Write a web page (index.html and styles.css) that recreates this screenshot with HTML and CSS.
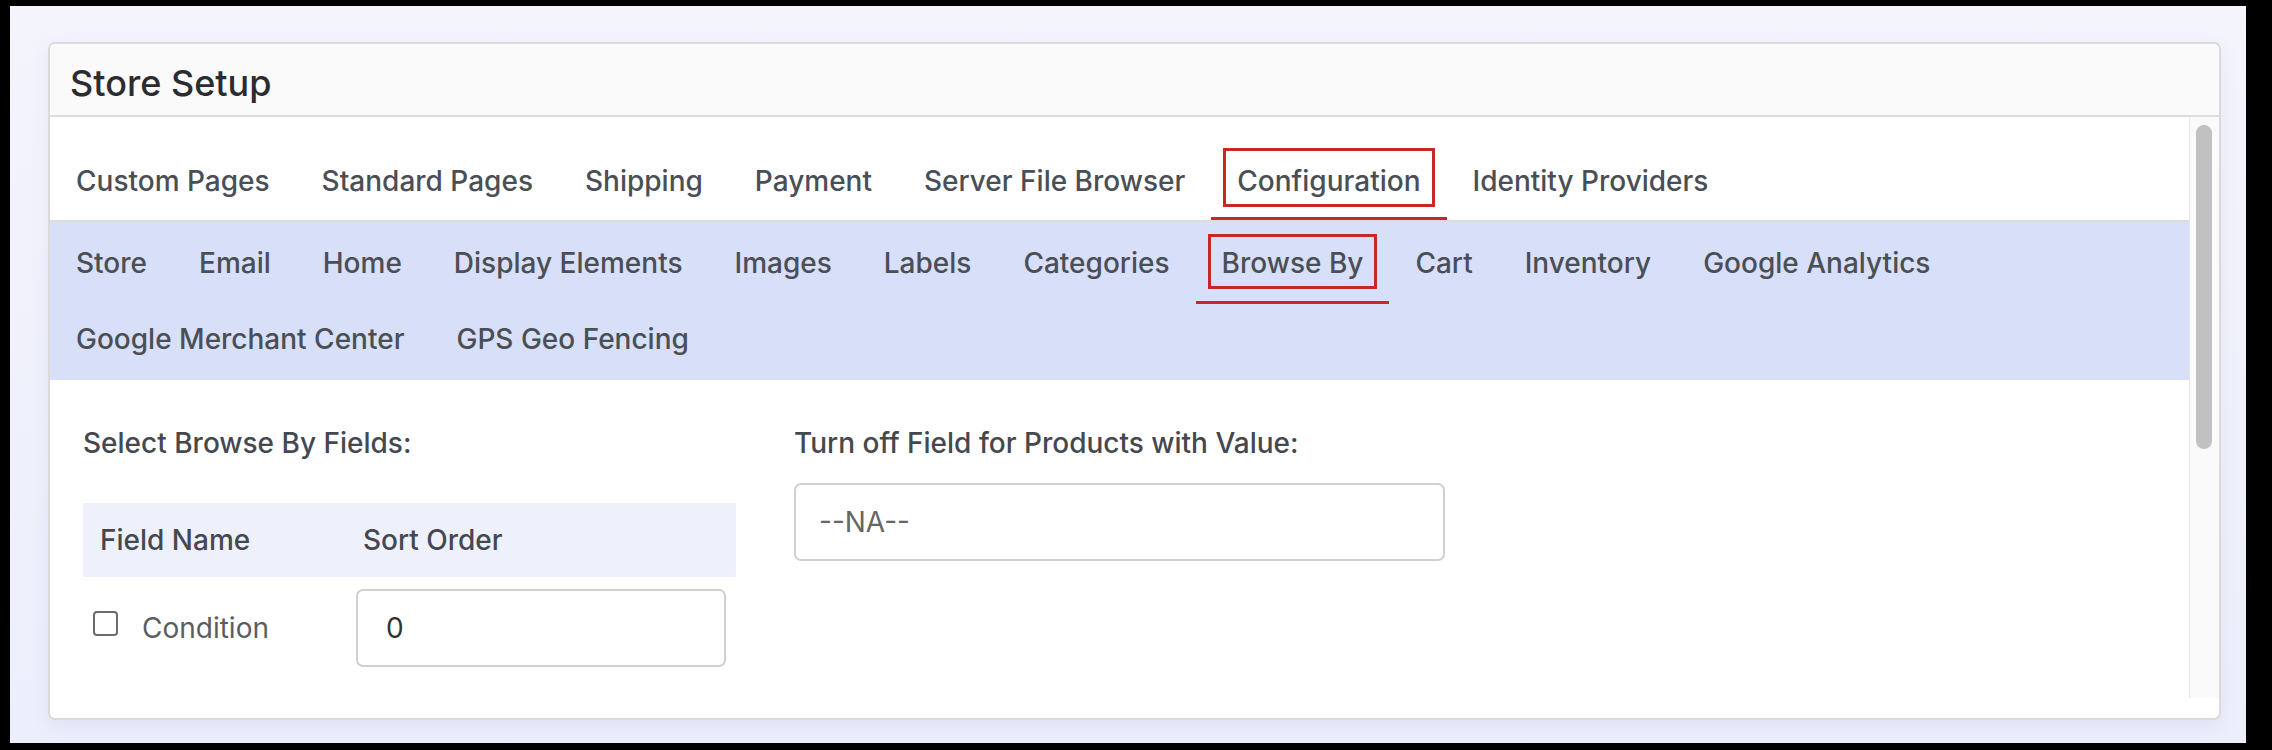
FILE: index.html
```html
<!DOCTYPE html>
<html>
<head>
<title>Store Setup - Browse By</title>
<link rel="stylesheet" href="styles.css">
</head>
<body>

	<div class="frame">
		<div class="card">
			<div class="card-head">Store Setup</div>

			<div class="card-body">
				<div class="scroll-view">
					<ul class="tabs">
						<li><a>Custom Pages</a></li>
						<li><a>Standard Pages</a></li>
						<li><a>Shipping</a></li>
						<li><a>Payment</a></li>
						<li><a>Server File Browser</a></li>
						<li><a class="active"><span class="mark">Configuration</span></a></li>
						<li><a>Identity Providers</a></li>
					</ul>

					<ul class="subtabs">
						<li><a>Store</a></li>
						<li><a>Email</a></li>
						<li><a>Home</a></li>
						<li><a>Display Elements</a></li>
						<li><a>Images</a></li>
						<li><a>Labels</a></li>
						<li><a>Categories</a></li>
						<li><a class="active"><span class="mark">Browse By</span></a></li>
						<li><a>Cart</a></li>
						<li><a>Inventory</a></li>
						<li><a>Google Analytics</a></li>
						<li><a>Google Merchant Center</a></li>
						<li><a>GPS Geo Fencing</a></li>
					</ul>

					<div class="panel">
						<div class="column">
							<div class="label">Select Browse By Fields:</div>
							<table class="fields">
								<tr>
									<th class="name-col">Field Name</th>
									<th>Sort Order</th>
								</tr>
								<tr>
									<td class="name-col">
										<label class="check"><span class="box"></span>Condition</label>
									</td>
									<td><div class="input">0</div></td>
								</tr>
							</table>
						</div>

						<div class="column">
							<div class="label">Turn off Field for Products with Value:</div>
							<div class="input select">--NA--</div>
						</div>
					</div>
				</div>

				<div class="scrollbar"><div class="thumb"></div></div>
			</div>

			<div class="card-foot"></div>
		</div>
	</div>

</body>
</html>
```

FILE: styles.css
```css
html, body
   {
   	margin			:  0px ;
   	padding			:  0px ;
   	background		:  #000000 ;
    }

body
   {
   	font-family		:  "Inter", "Liberation Sans", sans-serif ;
   	color			:  #4a4e55 ;
    }

.frame
   {
   	margin			:  6px 26px 7px 10px ;
   	height			:  737px ;
   	box-sizing		:  border-box ;
   	padding			:  36px 25px 0px 38px ;
   	background		:  linear-gradient(to bottom, #f3f4fc, #eceefb) ;
    }

.card
   {
   	border			:  2px solid #dadada ;
   	border-radius		:  7px ;
   	background		:  #ffffff ;
   	box-shadow		:  0px 6px 18px rgba(120, 130, 210, 0.10) ;
   	overflow		:  hidden ;
    }

.card-head
   {
   	height			:  73px ;
   	padding			:  6px 20px 0px 20px ;
   	box-sizing		:  border-box ;
   	display			:  flex ;
   	align-items		:  center ;
   	background		:  #fafafa ;
   	border-bottom		:  2px solid #dcdcdc ;
   	font-size		:  36px ;
   	font-weight		:  500 ;
   	color			:  #2b2c30 ;
    }

.card-body
   {
   	display			:  flex ;
   	height			:  581px ;
    }

.scroll-view
   {
   	flex			:  1 ;
   	overflow		:  hidden ;
    }

.scrollbar
   {
   	width			:  29px ;
   	border-left		:  1px solid #e6e6e6 ;
   	background		:  #fafafa ;
    }

.thumb
   {
   	width			:  16px ;
   	height			:  324px ;
   	margin			:  8px 0px 0px 6px ;
   	border-radius		:  8px ;
   	background		:  #c1c1c1 ;
    }

.card-foot
   {
   	height			:  20px ;
    }

/* Top level tabs */

.tabs, .subtabs
   {
   	list-style		:  none ;
   	margin			:  0px ;
   	padding			:  0px ;
   	display			:  flex ;
   	flex-wrap		:  wrap ;
   	font-size		:  28px ;
   	font-weight		:  500 ;
   	line-height		:  42px ;
    }

.tabs
   {
   	border-bottom		:  2px solid #dcdcdc ;
    }

.tabs a, .subtabs a
   {
   	display			:  block ;
   	padding			:  43px 26px 15px 26px ;
   	border-bottom		:  3px solid transparent ;
   	white-space		:  nowrap ;
    }

.subtabs
   {
   	padding			:  6px 0px 0px 0px ;
   	background		:  #d8dff8 ;
    }

.subtabs a
   {
   	padding			:  14px 26px 17px 26px ;
    }

.tabs a.active, .subtabs a.active
   {
   	border-bottom-color	:  #c62828 ;
    }

.mark
   {
   	display			:  inline-block ;
   	padding			:  5px 11px 2px 11px ;
   	margin			:  -8px -14px -5px -14px ;
   	border			:  3px solid #c62828 ;
    }

.tabs .mark
   {
   	padding-top		:  9px ;
   	margin-top		:  -12px ;
    }

/* Browse by panel */

.panel
   {
   	display			:  grid ;
   	grid-template-columns	:  653px 651px ;
   	column-gap		:  58px ;
   	padding			:  42px 33px 38px 33px ;
    }

.label
   {
   	font-size		:  28px ;
   	font-weight		:  500 ;
   	line-height		:  42px ;
   	color			:  #45484e ;
    }

.fields
   {
   	width			:  100% ;
   	margin-top		:  39px ;
   	border-collapse		:  collapse ;
    }

.fields th
   {
   	height			:  74px ;
   	padding			:  0px 17px ;
   	background		:  #eef1fb ;
   	text-align		:  left ;
   	font-size		:  28px ;
   	font-weight		:  500 ;
   	color			:  #45484e ;
    }

.fields td
   {
   	padding			:  12px 10px 0px 10px ;
    }

.name-col
   {
   	width			:  229px ;
    }

.check
   {
   	display			:  flex ;
   	align-items		:  center ;
   	gap			:  24px ;
   	font-size		:  28px ;
   	color			:  #5c5d61 ;
    }

.box
   {
   	width			:  21px ;
   	height			:  21px ;
   	border			:  2px solid #6b6b6b ;
   	border-radius		:  4px ;
   	margin-top		:  -10px ;
    }

.input
   {
   	height			:  74px ;
   	padding			:  0px 28px ;
   	display			:  flex ;
   	align-items		:  center ;
   	border			:  2px solid #d0d0d0 ;
   	border-radius		:  7px ;
   	font-size		:  28px ;
   	color			:  #333333 ;
   	box-sizing		:  content-box ;
    }

.fields .input
   {
   	width			:  310px ;
    }

.select
   {
   	margin-top		:  19px ;
   	padding			:  0px 23px ;
   	color			:  #666666 ;
    }
```
